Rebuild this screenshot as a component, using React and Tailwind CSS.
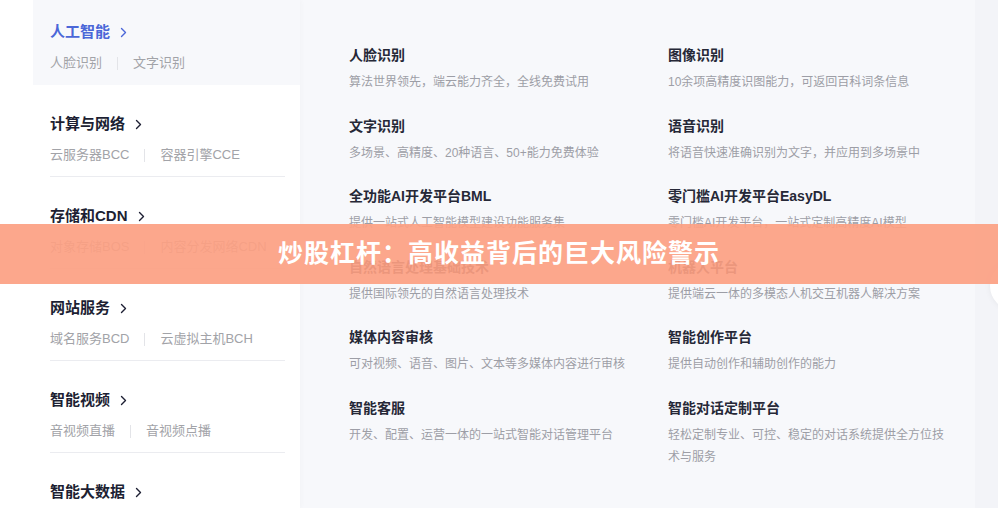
import React from "react";

const sidebar = [
  { t: "人工智能", a: ["人脸识别", "文字识别"], active: true },
  { t: "计算与网络", a: ["云服务器BCC", "容器引擎CCE"] },
  { t: "存储和CDN", a: ["对象存储BOS", "内容分发网络CDN"] },
  { t: "网站服务", a: ["域名服务BCD", "云虚拟主机BCH"] },
  { t: "智能视频", a: ["音视频直播", "音视频点播"] },
  { t: "智能大数据", a: [] },
];

const products = [
  ["人脸识别", "算法世界领先，端云能力齐全，全线免费试用"],
  ["图像识别", "10余项高精度识图能力，可返回百科词条信息"],
  ["文字识别", "多场景、高精度、20种语言、50+能力免费体验"],
  ["语音识别", "将语音快速准确识别为文字，并应用到多场景中"],
  ["全功能AI开发平台BML", "提供一站式人工智能模型建设功能服务集"],
  ["零门槛AI开发平台EasyDL", "零门槛AI开发平台，一站式定制高精度AI模型"],
  ["自然语言处理基础技术", "提供国际领先的自然语言处理技术"],
  ["机器人平台", "提供端云一体的多模态人机交互机器人解决方案"],
  ["媒体内容审核", "可对视频、语音、图片、文本等多媒体内容进行审核"],
  ["智能创作平台", "提供自动创作和辅助创作的能力"],
  ["智能客服", "开发、配置、运营一体的一站式智能对话管理平台"],
  ["智能对话定制平台", "轻松定制专业、可控、稳定的对话系统提供全方位技术与服务"],
];

function Chevron({ color }) {
  return (
    <svg width="7" height="11" viewBox="0 0 7 11" className="ml-[10px]" fill="none">
      <path d="M1.5 1.5L5.5 5.5L1.5 9.5" stroke={color} strokeWidth="1.4" strokeLinecap="round" strokeLinejoin="round" />
    </svg>
  );
}

export default function App() {
  return (
    <div
      className="relative flex h-[508px] w-[998px] overflow-hidden bg-white"
      style={{ fontFamily: '"Liberation Sans", "Noto Sans CJK SC", sans-serif' }}
    >
      <div className="w-[33px] shrink-0 bg-white" />
      <div className="relative z-10 flex w-[267px] shrink-0 flex-col bg-white shadow-[2px_0_4px_rgba(0,0,0,0.02)]">
        {sidebar.map((s) => (
          <div
            key={s.t}
            className={s.active ? "bg-[#f7f8fb] pl-[17px] pr-[17px]" : "pl-[17px] pr-[15px]"}
          >
            <div
              className={
                s.active
                  ? "pt-[21px] pb-[12px]"
                  : "border-b border-[#ebecf0] pt-[28px] pb-[11px]"
              }
            >
              <div className="flex items-center">
                <span
                  className={
                    "text-[15px] font-bold leading-[22px] " +
                    (s.active ? "text-[#4b67d8]" : "text-[#1d1f33]")
                  }
                >
                  {s.t}
                </span>
                <Chevron color={s.active ? "#4b67d8" : "#1d1f33"} />
              </div>
              {s.a.length > 0 && (
                <div className="mt-[10px] flex items-center text-[13px] leading-[20px] text-[#a2a3a8]">
                  <span>{s.a[0]}</span>
                  <span className="mx-[15px] h-[13px] w-px bg-[#e3e4e8]" />
                  <span>{s.a[1]}</span>
                </div>
              )}
            </div>
          </div>
        ))}
      </div>
      <div className="w-[675px] shrink-0 bg-[#f7f8fb] pl-[49px] pt-[45px]">
        <div className="grid grid-cols-[319px_319px] gap-y-[22.5px]">
          {products.map(([t, d]) => (
            <div key={t}>
              <div className="text-[14px] font-semibold leading-[20px] text-[#262837]">{t}</div>
              <div className="mt-[6px] w-[282px] text-[12px] leading-[22px] text-[#9d9ea6]">{d}</div>
            </div>
          ))}
        </div>
      </div>
      <div className="flex-1 bg-[#f3f4f8]" />

      <div className="absolute left-[990px] top-[262px] h-[48px] w-[48px] rounded-full bg-white shadow-[0_0_6px_rgba(0,0,0,0.06)]" />

      <div className="absolute left-0 top-[224px] z-20 flex h-[60px] w-full items-center justify-center bg-[rgba(252,160,130,0.92)]">
        <span className="text-[25px] font-bold tracking-[1px] text-white">
          炒股杠杆：高收益背后的巨大风险警示
        </span>
      </div>
    </div>
  );
}
